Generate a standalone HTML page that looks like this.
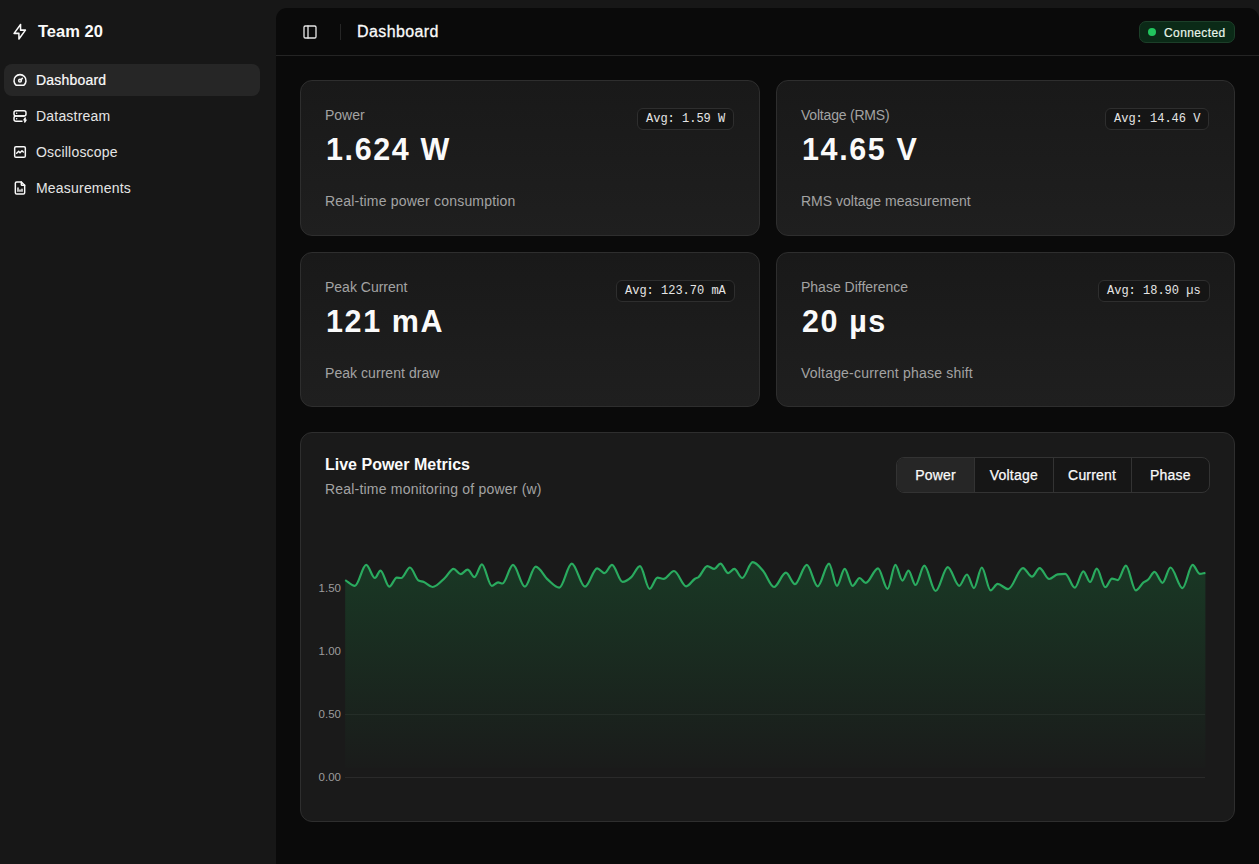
<!DOCTYPE html>
<html><head><meta charset="utf-8">
<style>
*{box-sizing:border-box;margin:0;padding:0}
html,body{width:1259px;height:864px;overflow:hidden;background:#171717;font-family:"Liberation Sans",sans-serif;color:#fafafa}
.abs{position:absolute}
.brand{left:38px;top:21px;font-size:16.5px;font-weight:bold;line-height:20px;white-space:nowrap}
.nav{left:4px;width:256px;height:32px;border-radius:8px}
.nav.active{background:#262626}
.nav svg{position:absolute;left:8px;top:8px}
.nav span{position:absolute;left:32px;top:6px;font-size:14px;line-height:20px;color:#e5e5e5;white-space:nowrap;letter-spacing:0.2px}
.main{left:276px;top:8px;width:983px;height:880px;background:#0a0a0a;border-radius:11px}
.hdr-line{left:276px;top:55px;width:983px;height:1px;background:#242424}
.card{background:linear-gradient(to top,#1f1f1f,#191919);border:1px solid #2e2e2e;border-radius:12px}
.lbl{font-size:14px;line-height:20px;color:#a3a3a3;white-space:nowrap}
.val{font-size:30.5px;line-height:36px;font-weight:bold;color:#fafafa;white-space:nowrap;letter-spacing:1.6px}
.desc{font-size:14px;line-height:20px;color:#a3a3a3;white-space:nowrap;letter-spacing:0.2px}
.avg{height:22px;border:1px solid #2e2e2e;background:#151515;border-radius:6px;font-family:"Liberation Mono",monospace;font-size:12px;line-height:20px;color:#e5e5e5;padding:0 8px;white-space:nowrap}
.tabs{left:896px;top:457px;width:314px;height:36px;border:1px solid #333;border-radius:8px;overflow:hidden;display:flex;background:#161616}
.tab{flex:1;text-align:center;font-size:14px;line-height:35px;-webkit-text-stroke:0.25px #fafafa;letter-spacing:0.2px;color:#fafafa;border-left:1px solid #333}
.tab:first-child{border-left:none;background:#262626}
.ylab{font-size:11.5px;color:#9c9c9c;text-align:right;width:40px;left:301px;line-height:14px}
</style></head><body>
<!-- sidebar -->
<svg class="abs" style="left:9.5px;top:22px" width="19.5" height="19.5" viewBox="0 0 24 24" fill="none" stroke="#fafafa" stroke-width="1.85" stroke-linecap="round" stroke-linejoin="round"><path d="M13 3l0 7l6 0l-8 11l0 -7l-6 0l8 -11"/></svg>
<div class="abs brand">Team 20</div>

<div class="abs nav active" style="top:64px">
<svg width="16" height="16" viewBox="0 0 24 24" fill="none" stroke="#fafafa" stroke-width="2.3" stroke-linecap="round" stroke-linejoin="round"><circle cx="12" cy="13" r="2"/><path d="M13.45 11.55l2.05-2.05"/><path d="M6.4 20a9 9 0 1 1 11.2 0z"/></svg>
<span style="color:#fafafa;-webkit-text-stroke:0.2px #fafafa">Dashboard</span></div>
<div class="abs nav" style="top:100px">
<svg width="16" height="16" viewBox="0 0 24 24" fill="none" stroke="#fafafa" stroke-width="2.2" stroke-linecap="round" stroke-linejoin="round"><path d="M3 7a3 3 0 0 1 3-3h12a3 3 0 0 1 3 3v2a3 3 0 0 1-3 3H6a3 3 0 0 1-3-3z"/><path d="M15 20H6a3 3 0 0 1-3-3v-2a3 3 0 0 1 3-3h12"/><path d="M7 8v.01M7 16v.01"/><path d="M20 15l-2 3h3l-2 3"/></svg>
<span>Datastream</span></div>
<div class="abs nav" style="top:136px">
<svg width="16" height="16" viewBox="0 0 24 24" fill="none" stroke="#fafafa" stroke-width="2.2" stroke-linecap="round" stroke-linejoin="round"><rect x="4" y="4" width="16" height="16" rx="2"/><path d="M7 14l3-3 2 2 3-3 2 2"/></svg>
<span>Oscilloscope</span></div>
<div class="abs nav" style="top:172px">
<svg width="16" height="16" viewBox="0 0 24 24" fill="none" stroke="#fafafa" stroke-width="2.2" stroke-linecap="round" stroke-linejoin="round"><path d="M14 3v4a1 1 0 0 0 1 1h4"/><path d="M17 21H7a2 2 0 0 1-2-2V5a2 2 0 0 1 2-2h7l5 5v11a2 2 0 0 1-2 2z"/><path d="M9 17v-5M12 17v-2M15 17v-3"/></svg>
<span>Measurements</span></div>

<!-- main -->
<div class="abs main"></div>
<div class="abs hdr-line"></div>
<svg class="abs" style="left:302px;top:24px" width="16" height="16" viewBox="0 0 24 24" fill="none" stroke="#e5e5e5" stroke-width="2" stroke-linecap="round" stroke-linejoin="round"><rect x="3" y="3" width="18" height="18" rx="2"/><path d="M9 3v18"/></svg>
<div class="abs" style="left:340px;top:24px;width:1px;height:16px;background:#262626"></div>
<div class="abs" style="left:357px;top:22px;font-size:16px;line-height:20px;white-space:nowrap;letter-spacing:0.4px;-webkit-text-stroke:0.3px #fafafa">Dashboard</div>
<div class="abs" style="left:1139px;top:21px;width:96px;height:22px;border-radius:7px;background:#0b2a17;border:1px solid #1c3f29"></div>
<div class="abs" style="left:1148px;top:28px;width:8px;height:8px;border-radius:4px;background:#22c55e"></div>
<div class="abs" style="left:1164px;top:25.5px;font-size:12px;line-height:14px;color:#e8f5ea;white-space:nowrap;letter-spacing:0.4px;-webkit-text-stroke:0.2px #e8f5ea">Connected</div>

<!-- cards -->
<div class="abs card" style="left:300px;top:80px;width:460px;height:155.5px"></div>
<div class="abs lbl" style="left:325px;top:105px">Power</div>
<div class="abs val" style="left:326px;top:130.5px">1.624 W</div>
<div class="abs desc" style="left:325px;top:191px">Real-time power consumption</div>
<div class="abs avg" style="left:637px;top:108px">Avg: 1.59 W</div>

<div class="abs card" style="left:776px;top:80px;width:459px;height:155.5px"></div>
<div class="abs lbl" style="left:801px;top:105px;letter-spacing:-0.2px">Voltage (RMS)</div>
<div class="abs val" style="left:802px;top:130.5px">14.65 V</div>
<div class="abs desc" style="left:801px;top:191px;letter-spacing:0">RMS voltage measurement</div>
<div class="abs avg" style="left:1105px;top:108px">Avg: 14.46 V</div>

<div class="abs card" style="left:300px;top:251.5px;width:460px;height:155.5px"></div>
<div class="abs lbl" style="left:325px;top:277px">Peak Current</div>
<div class="abs val" style="left:326px;top:303px">121 mA</div>
<div class="abs desc" style="left:325px;top:363px;letter-spacing:0.05px">Peak current draw</div>
<div class="abs avg" style="left:616px;top:280px">Avg: 123.70 mA</div>

<div class="abs card" style="left:776px;top:251.5px;width:459px;height:155.5px"></div>
<div class="abs lbl" style="left:801px;top:277px">Phase Difference</div>
<div class="abs val" style="left:802px;top:303px">20 µs</div>
<div class="abs desc" style="left:801px;top:363px">Voltage-current phase shift</div>
<div class="abs avg" style="left:1098px;top:280px">Avg: 18.90 µs</div>

<!-- chart card -->
<div class="abs card" style="left:300px;top:432px;width:935px;height:390px;background:#1a1a1a"></div>
<div class="abs" style="left:325px;top:455px;font-size:16px;line-height:20px;font-weight:bold;white-space:nowrap">Live Power Metrics</div>
<div class="abs desc" style="left:325px;top:479px">Real-time monitoring of power (w)</div>
<div class="abs tabs"><div class="tab">Power</div><div class="tab">Voltage</div><div class="tab">Current</div><div class="tab">Phase</div></div>

<div class="abs ylab" style="top:581px">1.50</div>
<div class="abs ylab" style="top:644px">1.00</div>
<div class="abs ylab" style="top:707px">0.50</div>
<div class="abs ylab" style="top:770px">0.00</div>
<svg class="abs" style="left:0;top:0" width="1259" height="864">
<defs><linearGradient id="g" x1="0" y1="560" x2="0" y2="768" gradientUnits="userSpaceOnUse"><stop offset="0" stop-color="#16a34a" stop-opacity="0.22"/><stop offset="1" stop-color="#16a34a" stop-opacity="0.01"/></linearGradient></defs>
<g stroke="#2a2a2a" stroke-width="1">
<line x1="345" y1="777.5" x2="1205" y2="777.5"/>
</g>
<path d="M345.2,580.1C348.4,582.0 351.7,585.8 354.9,585.8C358.7,585.8 362.4,564.9 366.2,564.9C369.1,564.9 372.0,578.0 374.9,578.0C376.8,578.0 378.6,570.6 380.5,570.6C383.4,570.6 386.4,586.7 389.3,586.7C391.8,586.7 394.3,577.6 396.8,577.6C398.3,577.6 399.7,578.0 401.2,578.0C404.1,578.0 407.0,567.5 409.9,567.5C412.8,567.5 415.7,579.1 418.6,580.6C420.4,581.5 422.1,581.3 423.9,582.0C426.8,583.1 429.7,587.0 432.6,587.0C436.7,587.0 440.7,581.7 444.8,578.0C447.7,575.3 450.7,568.9 453.6,568.9C455.9,568.9 458.3,574.1 460.6,574.1C462.9,574.1 465.3,569.7 467.6,569.7C469.9,569.7 472.2,577.1 474.5,577.1C477.0,577.1 479.4,564.3 481.9,564.3C485.2,564.3 488.4,585.8 491.7,585.8C493.8,585.8 496.0,582.3 498.1,582.3C499.6,582.3 501.0,583.5 502.5,583.5C506.0,583.5 509.5,564.9 513.0,564.9C517.0,564.9 520.9,586.7 524.9,586.7C528.5,586.7 532.1,566.6 535.7,566.6C539.8,566.6 543.8,576.1 547.9,579.7C551.7,583.0 555.5,587.6 559.3,587.6C563.5,587.6 567.6,563.6 571.8,563.6C576.2,563.6 580.6,586.7 585.0,586.7C589.1,586.7 593.1,568.3 597.2,568.3C599.6,568.3 602.1,573.1 604.5,573.1C607.0,573.1 609.5,564.9 612.0,564.9C615.5,564.9 619.0,581.8 622.5,581.8C625.4,581.8 628.4,579.7 631.3,577.1C634.2,574.5 637.1,566.1 640.0,566.1C643.2,566.1 646.4,588.8 649.6,588.8C652.2,588.8 654.9,577.6 657.5,577.6C659.5,577.6 661.6,578.8 663.6,578.8C667.1,578.8 670.5,571.0 674.0,571.0C678.1,571.0 682.2,586.3 686.3,586.3C689.2,586.3 692.1,580.5 695.0,578.8C696.2,578.1 697.3,577.9 698.5,577.1C701.4,575.0 704.4,566.1 707.3,566.1C709.6,566.1 712.0,568.9 714.3,568.9C716.3,568.9 718.4,563.6 720.4,563.6C723.0,563.6 725.6,573.1 728.2,573.1C730.2,573.1 732.3,568.9 734.3,568.9C736.9,568.9 739.6,578.0 742.2,578.0C745.7,578.0 749.2,562.2 752.7,562.2C756.2,562.2 759.7,567.0 763.2,571.0C766.8,575.2 770.4,587.0 774.0,587.0C778.0,587.0 781.9,572.7 785.9,572.7C788.9,572.7 792.0,584.1 795.0,584.1C798.9,584.1 802.9,564.9 806.8,564.9C810.4,564.9 814.1,586.3 817.7,586.3C821.5,586.3 825.2,563.6 829.0,563.6C831.6,563.6 834.3,585.8 836.9,585.8C839.5,585.8 842.1,568.9 844.7,568.9C847.3,568.9 850.0,585.8 852.6,585.8C854.9,585.8 857.3,578.0 859.6,578.0C861.6,578.0 863.7,582.9 865.7,582.9C869.8,582.9 873.9,568.3 878.0,568.3C881.2,568.3 884.4,588.8 887.6,588.8C890.2,588.8 892.8,564.9 895.4,564.9C897.7,564.9 900.1,580.6 902.4,580.6C904.4,580.6 906.5,570.6 908.5,570.6C910.8,570.6 913.2,585.0 915.5,585.0C918.4,585.0 921.4,565.7 924.3,565.7C928.1,565.7 931.8,591.0 935.6,591.0C939.7,591.0 943.7,567.1 947.8,567.1C951.6,567.1 955.4,585.8 959.2,585.8C961.8,585.8 964.4,574.5 967.0,574.5C969.3,574.5 971.7,588.1 974.0,588.1C976.6,588.1 979.2,567.5 981.8,567.5C984.7,567.5 987.7,590.4 990.6,590.4C992.9,590.4 995.3,583.9 997.6,583.9C1001.1,583.9 1004.6,589.1 1008.1,589.1C1013.1,589.1 1018.0,568.1 1023.0,568.1C1026.0,568.1 1029.0,576.7 1032.0,576.7C1034.5,576.7 1037.1,568.1 1039.6,568.1C1042.8,568.1 1045.9,579.0 1049.1,579.0C1052.0,579.0 1054.8,574.9 1057.7,574.4C1060.2,574.0 1062.8,573.8 1065.3,573.8C1068.5,573.8 1071.6,587.7 1074.8,587.7C1077.7,587.7 1080.5,571.3 1083.4,571.3C1085.6,571.3 1087.9,582.0 1090.1,582.0C1092.3,582.0 1094.6,568.7 1096.8,568.7C1099.6,568.7 1102.5,587.2 1105.3,587.2C1107.5,587.2 1109.8,578.6 1112.0,578.6C1113.9,578.6 1115.8,580.1 1117.7,580.1C1120.4,580.1 1123.2,565.6 1125.9,565.6C1129.2,565.6 1132.5,590.4 1135.8,590.4C1138.4,590.4 1140.9,584.4 1143.5,582.4C1145.1,581.2 1146.6,580.9 1148.2,579.5C1150.3,577.7 1152.4,571.9 1154.5,571.9C1157.2,571.9 1159.8,582.8 1162.5,582.8C1165.2,582.8 1167.8,567.5 1170.5,567.5C1174.5,567.5 1178.5,588.1 1182.5,588.1C1185.9,588.1 1189.2,564.9 1192.6,564.9C1195.0,564.9 1197.3,573.8 1199.7,573.8C1201.6,573.8 1203.5,573.2 1205.4,572.9 L1205.4,768 L345.2,768 Z" fill="url(#g)"/>
<line x1="345" y1="714.5" x2="1205" y2="714.5" stroke="#ffffff" stroke-opacity="0.05"/>
<path d="M345.2,580.1C348.4,582.0 351.7,585.8 354.9,585.8C358.7,585.8 362.4,564.9 366.2,564.9C369.1,564.9 372.0,578.0 374.9,578.0C376.8,578.0 378.6,570.6 380.5,570.6C383.4,570.6 386.4,586.7 389.3,586.7C391.8,586.7 394.3,577.6 396.8,577.6C398.3,577.6 399.7,578.0 401.2,578.0C404.1,578.0 407.0,567.5 409.9,567.5C412.8,567.5 415.7,579.1 418.6,580.6C420.4,581.5 422.1,581.3 423.9,582.0C426.8,583.1 429.7,587.0 432.6,587.0C436.7,587.0 440.7,581.7 444.8,578.0C447.7,575.3 450.7,568.9 453.6,568.9C455.9,568.9 458.3,574.1 460.6,574.1C462.9,574.1 465.3,569.7 467.6,569.7C469.9,569.7 472.2,577.1 474.5,577.1C477.0,577.1 479.4,564.3 481.9,564.3C485.2,564.3 488.4,585.8 491.7,585.8C493.8,585.8 496.0,582.3 498.1,582.3C499.6,582.3 501.0,583.5 502.5,583.5C506.0,583.5 509.5,564.9 513.0,564.9C517.0,564.9 520.9,586.7 524.9,586.7C528.5,586.7 532.1,566.6 535.7,566.6C539.8,566.6 543.8,576.1 547.9,579.7C551.7,583.0 555.5,587.6 559.3,587.6C563.5,587.6 567.6,563.6 571.8,563.6C576.2,563.6 580.6,586.7 585.0,586.7C589.1,586.7 593.1,568.3 597.2,568.3C599.6,568.3 602.1,573.1 604.5,573.1C607.0,573.1 609.5,564.9 612.0,564.9C615.5,564.9 619.0,581.8 622.5,581.8C625.4,581.8 628.4,579.7 631.3,577.1C634.2,574.5 637.1,566.1 640.0,566.1C643.2,566.1 646.4,588.8 649.6,588.8C652.2,588.8 654.9,577.6 657.5,577.6C659.5,577.6 661.6,578.8 663.6,578.8C667.1,578.8 670.5,571.0 674.0,571.0C678.1,571.0 682.2,586.3 686.3,586.3C689.2,586.3 692.1,580.5 695.0,578.8C696.2,578.1 697.3,577.9 698.5,577.1C701.4,575.0 704.4,566.1 707.3,566.1C709.6,566.1 712.0,568.9 714.3,568.9C716.3,568.9 718.4,563.6 720.4,563.6C723.0,563.6 725.6,573.1 728.2,573.1C730.2,573.1 732.3,568.9 734.3,568.9C736.9,568.9 739.6,578.0 742.2,578.0C745.7,578.0 749.2,562.2 752.7,562.2C756.2,562.2 759.7,567.0 763.2,571.0C766.8,575.2 770.4,587.0 774.0,587.0C778.0,587.0 781.9,572.7 785.9,572.7C788.9,572.7 792.0,584.1 795.0,584.1C798.9,584.1 802.9,564.9 806.8,564.9C810.4,564.9 814.1,586.3 817.7,586.3C821.5,586.3 825.2,563.6 829.0,563.6C831.6,563.6 834.3,585.8 836.9,585.8C839.5,585.8 842.1,568.9 844.7,568.9C847.3,568.9 850.0,585.8 852.6,585.8C854.9,585.8 857.3,578.0 859.6,578.0C861.6,578.0 863.7,582.9 865.7,582.9C869.8,582.9 873.9,568.3 878.0,568.3C881.2,568.3 884.4,588.8 887.6,588.8C890.2,588.8 892.8,564.9 895.4,564.9C897.7,564.9 900.1,580.6 902.4,580.6C904.4,580.6 906.5,570.6 908.5,570.6C910.8,570.6 913.2,585.0 915.5,585.0C918.4,585.0 921.4,565.7 924.3,565.7C928.1,565.7 931.8,591.0 935.6,591.0C939.7,591.0 943.7,567.1 947.8,567.1C951.6,567.1 955.4,585.8 959.2,585.8C961.8,585.8 964.4,574.5 967.0,574.5C969.3,574.5 971.7,588.1 974.0,588.1C976.6,588.1 979.2,567.5 981.8,567.5C984.7,567.5 987.7,590.4 990.6,590.4C992.9,590.4 995.3,583.9 997.6,583.9C1001.1,583.9 1004.6,589.1 1008.1,589.1C1013.1,589.1 1018.0,568.1 1023.0,568.1C1026.0,568.1 1029.0,576.7 1032.0,576.7C1034.5,576.7 1037.1,568.1 1039.6,568.1C1042.8,568.1 1045.9,579.0 1049.1,579.0C1052.0,579.0 1054.8,574.9 1057.7,574.4C1060.2,574.0 1062.8,573.8 1065.3,573.8C1068.5,573.8 1071.6,587.7 1074.8,587.7C1077.7,587.7 1080.5,571.3 1083.4,571.3C1085.6,571.3 1087.9,582.0 1090.1,582.0C1092.3,582.0 1094.6,568.7 1096.8,568.7C1099.6,568.7 1102.5,587.2 1105.3,587.2C1107.5,587.2 1109.8,578.6 1112.0,578.6C1113.9,578.6 1115.8,580.1 1117.7,580.1C1120.4,580.1 1123.2,565.6 1125.9,565.6C1129.2,565.6 1132.5,590.4 1135.8,590.4C1138.4,590.4 1140.9,584.4 1143.5,582.4C1145.1,581.2 1146.6,580.9 1148.2,579.5C1150.3,577.7 1152.4,571.9 1154.5,571.9C1157.2,571.9 1159.8,582.8 1162.5,582.8C1165.2,582.8 1167.8,567.5 1170.5,567.5C1174.5,567.5 1178.5,588.1 1182.5,588.1C1185.9,588.1 1189.2,564.9 1192.6,564.9C1195.0,564.9 1197.3,573.8 1199.7,573.8C1201.6,573.8 1203.5,573.2 1205.4,572.9" fill="none" stroke="#2aab5f" stroke-width="2.2"/>
</svg>
</body></html>
